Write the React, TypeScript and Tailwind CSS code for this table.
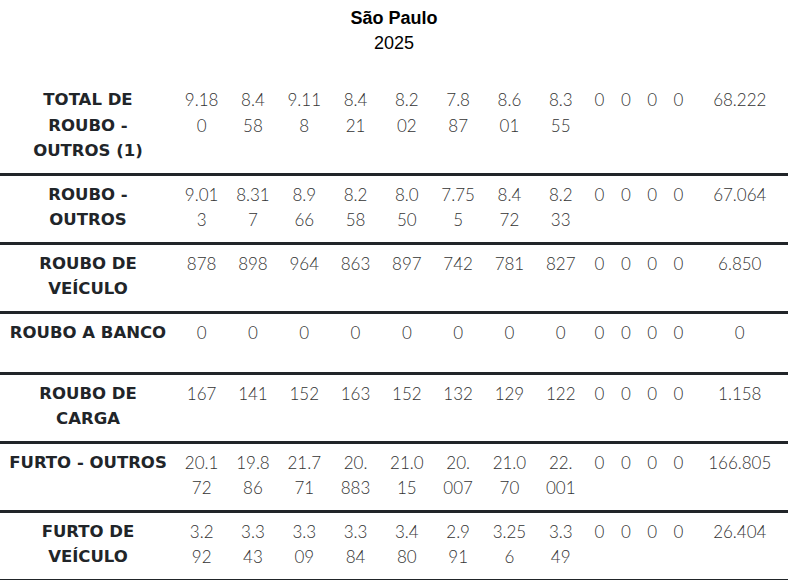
const rows = [
  {
    label: "TOTAL DE\nROUBO -\nOUTROS (1)",
    months: ["9.18\n0", "8.4\n58", "9.11\n8", "8.4\n21", "8.2\n02", "7.8\n87", "8.6\n01", "8.3\n55"],
    total: "68.222",
  },
  {
    label: "ROUBO -\nOUTROS",
    months: ["9.01\n3", "8.31\n7", "8.9\n66", "8.2\n58", "8.0\n50", "7.75\n5", "8.4\n72", "8.2\n33"],
    total: "67.064",
  },
  {
    label: "ROUBO DE\nVEÍCULO",
    months: ["878", "898", "964", "863", "897", "742", "781", "827"],
    total: "6.850",
  },
  {
    label: "ROUBO A BANCO",
    months: ["0", "0", "0", "0", "0", "0", "0", "0"],
    total: "0",
    tall: true,
  },
  {
    label: "ROUBO DE\nCARGA",
    months: ["167", "141", "152", "163", "152", "132", "129", "122"],
    total: "1.158",
  },
  {
    label: "FURTO - OUTROS",
    months: ["20.1\n72", "19.8\n86", "21.7\n71", "20.\n883", "21.0\n15", "20.\n007", "21.0\n70", "22.\n001"],
    total: "166.805",
  },
  {
    label: "FURTO DE\nVEÍCULO",
    months: ["3.2\n92", "3.3\n43", "3.3\n09", "3.3\n84", "3.4\n80", "2.9\n91", "3.25\n6", "3.3\n49"],
    total: "26.404",
  },
];

const num = "font-['Lato',sans-serif] font-light text-[17px] text-[#333] text-center align-top whitespace-pre-line";

export default function App() {
  return (
    <div className="w-[788px] min-h-[580px] bg-white text-[#212529] leading-[25.5px]">
      <div className="pt-[6px] pb-[25px] text-center text-black font-['Liberation_Sans',Arial,sans-serif] text-[18px] leading-[25px]">
        <div className="font-bold">São Paulo</div>
        <div>2025</div>
      </div>

      <table className="w-[788px] table-fixed">
        <colgroup>
          <col className="w-[176px]" />
          {[0, 1, 2, 3, 4, 5, 6, 7].map((i) => (
            <col key={i} className="w-[51.3px]" />
          ))}
          {[0, 1, 2, 3].map((i) => (
            <col key={"z" + i} className="w-[26.3px]" />
          ))}
          <col />
        </colgroup>
        <tbody>
          {rows.map((r) => (
            <tr key={r.label} className={"border-b-[3px] border-[#212529] " + (r.tall ? "h-[61px]" : "")}>
              <td className="pt-[6px] pb-[9px] align-top text-center whitespace-pre-line font-['DejaVu_Sans',sans-serif] font-bold text-[16.5px] text-[#212529]">
                {r.label}
              </td>
              {r.months.map((m, i) => (
                <td key={i} className={"pt-[6px] pb-[9px] " + num}>
                  {m}
                </td>
              ))}
              {[0, 1, 2, 3].map((i) => (
                <td key={"z" + i} className={"pt-[6px] pb-[9px] " + num}>
                  0
                </td>
              ))}
              <td className={"pt-[6px] pb-[9px] " + num}>{r.total}</td>
            </tr>
          ))}
        </tbody>
      </table>
    </div>
  );
}
